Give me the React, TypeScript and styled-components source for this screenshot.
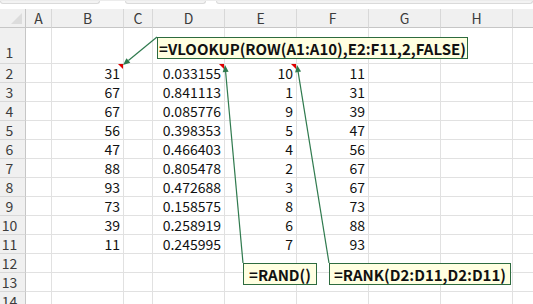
import { createGlobalStyle } from "styled-components";
import styled from "styled-components";

const GlobalStyle = createGlobalStyle`
  html, body {
    margin: 0;
    padding: 0;
    background: #ffffff;
  }
  body {
    font-family: "Noto Sans CJK JP", "Noto Sans", sans-serif;
    overflow: hidden;
  }
`;

// the last column is only a sliver at the right edge, so its letter is not shown
const COLS = ["A", "B", "C", "D", "E", "F", "G", "H", "I"];
const COL_WIDTHS = [26, 26, 72, 29, 72, 72, 72, 72, 72, 72];

const B = [31, 67, 67, 56, 47, 88, 93, 73, 39, 11];
const D = [
  "0.033155",
  "0.841113",
  "0.085776",
  "0.398353",
  "0.466403",
  "0.805478",
  "0.472688",
  "0.158575",
  "0.258919",
  "0.245995",
];
const E = [10, 1, 9, 5, 4, 2, 3, 8, 6, 7];
const F = [11, 31, 39, 47, 56, 67, 67, 73, 88, 93];

const Page = styled.div`
  position: relative;
  width: 533px;
  height: 304px;
  overflow: hidden;
  background: #fff;
`;

const TopStrip = styled.div`
  height: 9px;
  display: flex;
  align-items: flex-start;
  border-top: 1px solid #ececec;
  box-sizing: border-box;
`;

const Bump = styled.div<{ $w: number; $ml: number }>`
  width: ${(p) => p.$w}px;
  margin-left: ${(p) => p.$ml}px;
  height: 2px;
  background: #f3f3f3;
  border: 1px solid #dadada;
  border-top: none;
  border-radius: 0 0 3px 3px;
`;

const Sheet = styled.div`
  display: grid;
  grid-template-columns: ${COL_WIDTHS.map((w) => w + "px").join(" ")};
  grid-template-rows: 19px 36px repeat(13, 19px);
  width: 585px;
`;

const Corner = styled.div`
  position: relative;
  background: #f0f0f0;
  border-right: 1px solid #c6c6c6;
  border-bottom: 1px solid #c6c6c6;
  box-sizing: border-box;

  &::after {
    content: "";
    position: absolute;
    right: 3px;
    bottom: 3px;
    border-style: solid;
    border-width: 0 0 11px 11px;
    border-color: transparent transparent #dcdcdc transparent;
  }
`;

const ColHead = styled.div`
  display: flex;
  align-items: center;
  justify-content: center;
  background: #f0f0f0;
  border-right: 1px solid #d8d8d8;
  border-bottom: 1px solid #c6c6c6;
  box-sizing: border-box;
  font-size: 14px;
  color: #3c3c3c;
  line-height: 1;
`;

const RowHead = styled.div<{ $tall?: boolean }>`
  display: flex;
  align-items: ${(p) => (p.$tall ? "flex-end" : "center")};
  justify-content: center;
  padding-right: 6px;
  padding-bottom: ${(p) => (p.$tall ? "4px" : "0")};
  background: #f0f0f0;
  border-right: 1px solid #c6c6c6;
  border-bottom: 1px solid #d8d8d8;
  box-sizing: border-box;
  font-size: 14px;
  color: #3c3c3c;
  line-height: 1;
`;

const Cell = styled.div<{ $note?: boolean }>`
  position: relative;
  display: flex;
  align-items: center;
  justify-content: flex-end;
  padding-right: 3px;
  border-right: 1px solid #e1e1e1;
  border-bottom: 1px solid #e1e1e1;
  box-sizing: border-box;
  font-size: 14px;
  color: #111;
  line-height: 1;
  white-space: nowrap;

  &::after {
    content: "";
    display: ${(p) => (p.$note ? "block" : "none")};
    position: absolute;
    top: 0;
    right: 0;
    border-style: solid;
    border-width: 0 5px 5px 0;
    border-color: transparent #e00000 transparent transparent;
  }
`;

const Callout = styled.div<{ $x: number; $y: number; $w: number }>`
  position: absolute;
  left: ${(p) => p.$x}px;
  top: ${(p) => p.$y}px;
  width: ${(p) => p.$w}px;
  height: 22px;
  box-sizing: border-box;
  display: flex;
  align-items: center;
  justify-content: center;
  background: #ffffe1;
  border: 1px solid #2d6b3f;
  font-weight: 700;
  font-size: 15px;
  color: #111;
  white-space: nowrap;
  line-height: 1;
`;

const Overlay = styled.svg`
  position: absolute;
  left: 0;
  top: 0;
  pointer-events: none;
`;

const ARROW = "#2f7a4e";

function Arrow({ x1, y1, x2, y2 }: { x1: number; y1: number; x2: number; y2: number }) {
  const dx = x2 - x1;
  const dy = y2 - y1;
  const d = Math.hypot(dx, dy);
  const ux = dx / d;
  const uy = dy / d;
  const len = 7;
  const w = 3;
  const bx = x2 - ux * len;
  const by = y2 - uy * len;
  const pts = [
    [x2, y2],
    [bx - uy * w, by + ux * w],
    [bx + uy * w, by - ux * w],
  ]
    .map((p) => p.join(","))
    .join(" ");
  return (
    <g>
      <line x1={x1} y1={y1} x2={bx} y2={by} stroke={ARROW} strokeWidth={1.2} />
      <polygon points={pts} fill={ARROW} />
    </g>
  );
}

function cellValue(col: string, row: number): string | number {
  const i = row - 2;
  if (i < 0 || i > 9) return "";
  if (col === "B") return B[i];
  if (col === "D") return D[i];
  if (col === "E") return E[i];
  if (col === "F") return F[i];
  return "";
}

export default function App() {
  const rows = Array.from({ length: 14 }, (_, i) => i + 1);
  return (
    <>
      <GlobalStyle />
      <Page>
        <TopStrip>
          <Bump $ml={0} $w={99} />
          <Bump $ml={25} $w={80} />
          <Bump $ml={10} $w={318} />
        </TopStrip>
        <Sheet>
          <Corner />
          {COLS.map((c) => (
            <ColHead key={c}>{c === "I" ? "" : c}</ColHead>
          ))}
          {rows.map((r) => (
            <Row key={r} r={r} />
          ))}
        </Sheet>
        <Overlay width={533} height={304}>
          <Arrow x1={157} y1={37} x2={123} y2={65} />
          <Arrow x1={243} y1={263} x2={225} y2={65} />
          <Arrow x1={329} y1={263} x2={297} y2={65} />
        </Overlay>
        <Callout $x={157} $y={37} $w={311}>
          =VLOOKUP(ROW(A1:A10),E2:F11,2,FALSE)
        </Callout>
        <Callout $x={243} $y={263} $w={74}>
          =RAND()
        </Callout>
        <Callout $x={329} $y={263} $w={182}>
          =RANK(D2:D11,D2:D11)
        </Callout>
      </Page>
    </>
  );
}

function Row({ r }: { r: number }) {
  return (
    <>
      <RowHead $tall={r === 1}>{r}</RowHead>
      {COLS.map((c) => (
        <Cell key={c} $note={r === 2 && (c === "B" || c === "D" || c === "E")}>
          {cellValue(c, r)}
        </Cell>
      ))}
    </>
  );
}
